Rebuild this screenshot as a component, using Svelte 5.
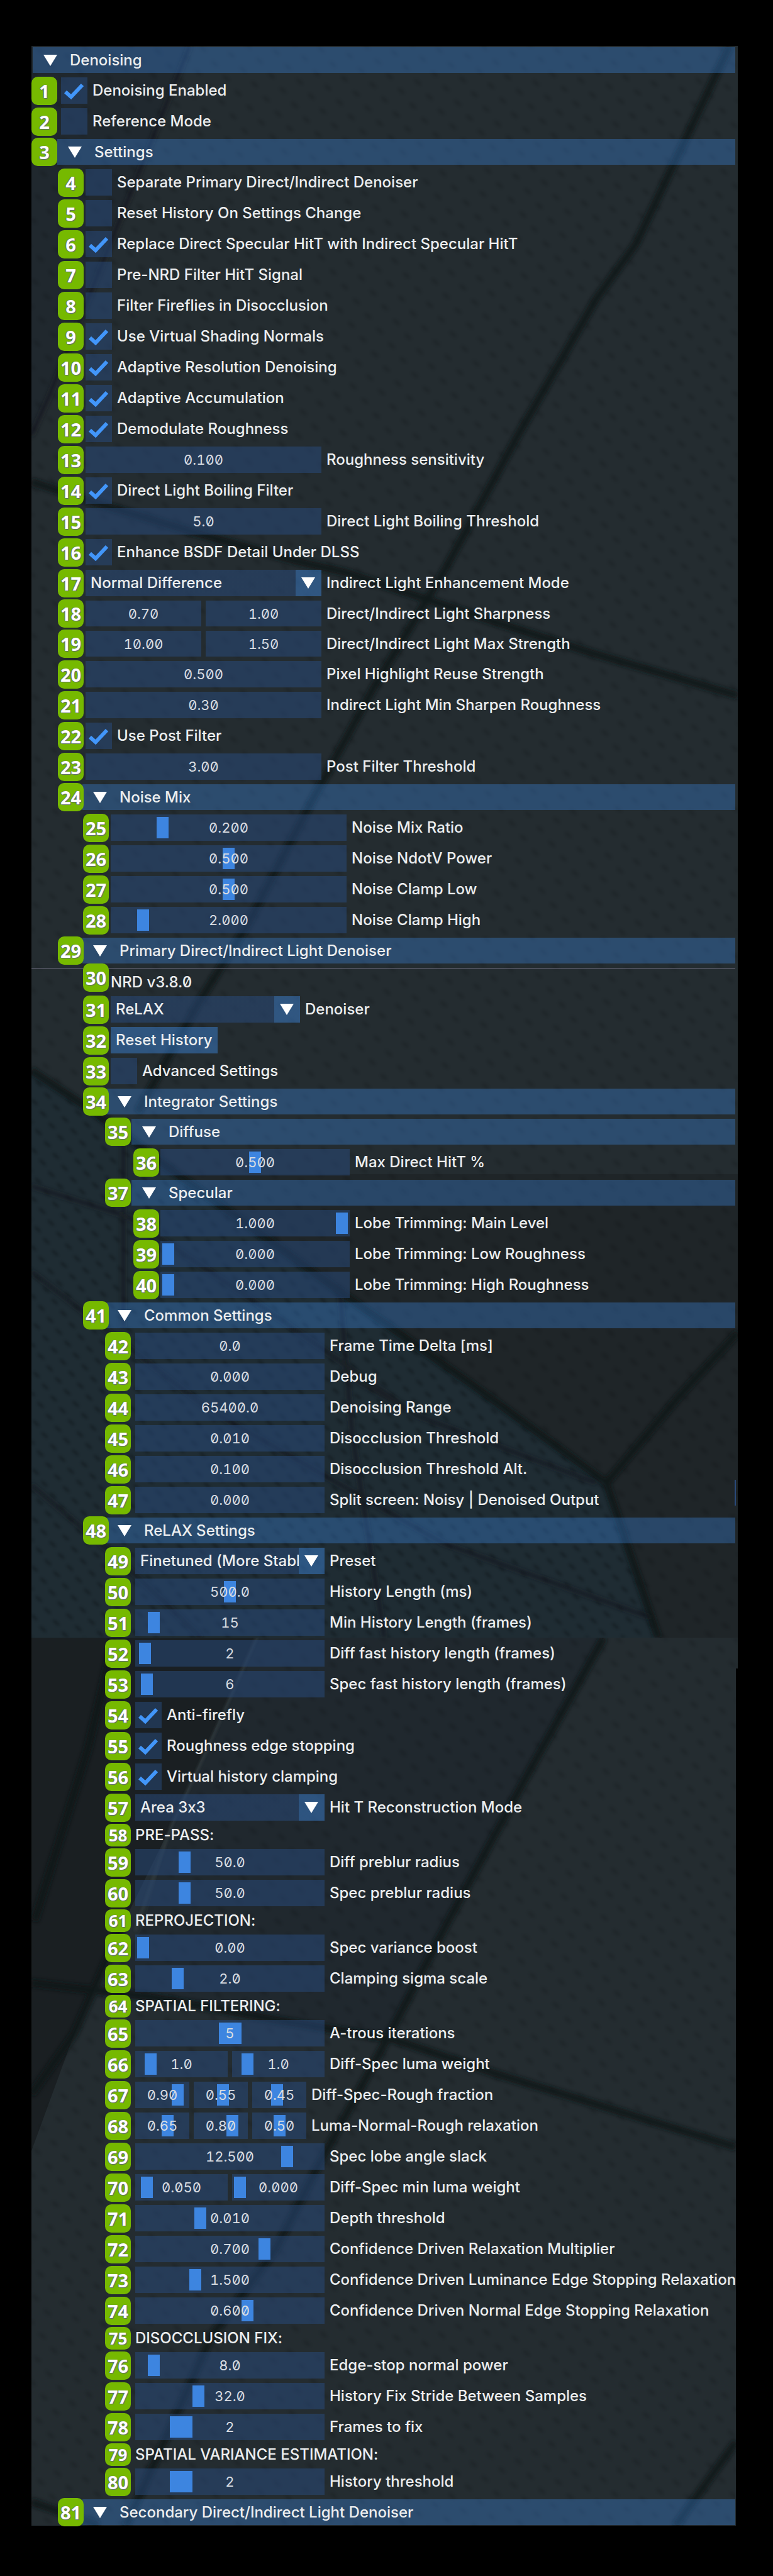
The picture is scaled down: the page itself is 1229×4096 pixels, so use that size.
<script lang="ts">
  type Row = {
    n?: number;
    lv: number;
    t: 'head' | 'check' | 'drag' | 'slide' | 'select' | 'button' | 'text' | 'version';
    label: string;
    on?: boolean;
    v?: string[];
    p?: number[];
    wide?: boolean;
  };

  const head = (n: number, lv: number, label: string): Row => ({ n, lv, t: 'head', label });
  const check = (n: number, lv: number, label: string, on = false): Row => ({ n, lv, t: 'check', label, on });
  const drag = (n: number, lv: number, label: string, ...v: string[]): Row => ({ n, lv, t: 'drag', label, v });
  const slide = (n: number, lv: number, label: string, v: string[], p: number[], wide = false): Row => ({ n, lv, t: 'slide', label, v, p, wide });
  const select = (n: number, lv: number, label: string, value: string): Row => ({ n, lv, t: 'select', label, v: [value] });
  const text = (n: number, lv: number, label: string): Row => ({ n, lv, t: 'text', label });

  const rows: Row[] = [
    { lv: 0, t: 'head', label: 'Denoising' },
    check(1, 0, 'Denoising Enabled', true),
    check(2, 0, 'Reference Mode'),
    head(3, 0, 'Settings'),
    check(4, 1, 'Separate Primary Direct/Indirect Denoiser'),
    check(5, 1, 'Reset History On Settings Change'),
    check(6, 1, 'Replace Direct Specular HitT with Indirect Specular HitT', true),
    check(7, 1, 'Pre-NRD Filter HitT Signal'),
    check(8, 1, 'Filter Fireflies in Disocclusion'),
    check(9, 1, 'Use Virtual Shading Normals', true),
    check(10, 1, 'Adaptive Resolution Denoising', true),
    check(11, 1, 'Adaptive Accumulation', true),
    check(12, 1, 'Demodulate Roughness', true),
    drag(13, 1, 'Roughness sensitivity', '0.100'),
    check(14, 1, 'Direct Light Boiling Filter', true),
    drag(15, 1, 'Direct Light Boiling Threshold', '5.0'),
    check(16, 1, 'Enhance BSDF Detail Under DLSS', true),
    select(17, 1, 'Indirect Light Enhancement Mode', 'Normal Difference'),
    drag(18, 1, 'Direct/Indirect Light Sharpness', '0.70', '1.00'),
    drag(19, 1, 'Direct/Indirect Light Max Strength', '10.00', '1.50'),
    drag(20, 1, 'Pixel Highlight Reuse Strength', '0.500'),
    drag(21, 1, 'Indirect Light Min Sharpen Roughness', '0.30'),
    check(22, 1, 'Use Post Filter', true),
    drag(23, 1, 'Post Filter Threshold', '3.00'),
    head(24, 1, 'Noise Mix'),
    slide(25, 2, 'Noise Mix Ratio', ['0.200'], [20]),
    slide(26, 2, 'Noise NdotV Power', ['0.500'], [50]),
    slide(27, 2, 'Noise Clamp Low', ['0.500'], [50]),
    slide(28, 2, 'Noise Clamp High', ['2.000'], [11]),
    head(29, 1, 'Primary Direct/Indirect Light Denoiser'),
    { n: 30, lv: 2, t: 'version', label: 'NRD v3.8.0' },
    select(31, 2, 'Denoiser', 'ReLAX'),
    { n: 32, lv: 2, t: 'button', label: 'Reset History' },
    check(33, 2, 'Advanced Settings'),
    head(34, 2, 'Integrator Settings'),
    head(35, 3, 'Diffuse'),
    slide(36, 4, 'Max Direct HitT %', ['0.500'], [50]),
    head(37, 3, 'Specular'),
    slide(38, 4, 'Lobe Trimming: Main Level', ['1.000'], [100]),
    slide(39, 4, 'Lobe Trimming: Low Roughness', ['0.000'], [0]),
    slide(40, 4, 'Lobe Trimming: High Roughness', ['0.000'], [0]),
    head(41, 2, 'Common Settings'),
    drag(42, 3, 'Frame Time Delta [ms]', '0.0'),
    drag(43, 3, 'Debug', '0.000'),
    drag(44, 3, 'Denoising Range', '65400.0'),
    drag(45, 3, 'Disocclusion Threshold', '0.010'),
    drag(46, 3, 'Disocclusion Threshold Alt.', '0.100'),
    drag(47, 3, 'Split screen: Noisy | Denoised Output', '0.000'),
    head(48, 2, 'ReLAX Settings'),
    select(49, 3, 'Preset', 'Finetuned (More Stable)'),
    slide(50, 3, 'History Length (ms)', ['500.0'], [50]),
    slide(51, 3, 'Min History Length (frames)', ['15'], [6]),
    slide(52, 3, 'Diff fast history length (frames)', ['2'], [1]),
    slide(53, 3, 'Spec fast history length (frames)', ['6'], [2]),
    check(54, 3, 'Anti-firefly', true),
    check(55, 3, 'Roughness edge stopping', true),
    check(56, 3, 'Virtual history clamping', true),
    select(57, 3, 'Hit T Reconstruction Mode', 'Area 3x3'),
    text(58, 3, 'PRE-PASS:'),
    slide(59, 3, 'Diff preblur radius', ['50.0'], [24]),
    slide(60, 3, 'Spec preblur radius', ['50.0'], [24]),
    text(61, 3, 'REPROJECTION:'),
    slide(62, 3, 'Spec variance boost', ['0.00'], [0]),
    slide(63, 3, 'Clamping sigma scale', ['2.0'], [20]),
    text(64, 3, 'SPATIAL FILTERING:'),
    slide(65, 3, 'A-trous iterations', ['5'], [50], true),
    slide(66, 3, 'Diff-Spec luma weight', ['1.0', '1.0'], [10, 10]),
    slide(67, 3, 'Diff-Spec-Rough fraction', ['0.90', '0.55', '0.45'], [90, 55, 45]),
    slide(68, 3, 'Luma-Normal-Rough relaxation', ['0.65', '0.80', '0.50'], [64, 80, 50]),
    slide(69, 3, 'Spec lobe angle slack', ['12.500'], [83]),
    slide(70, 3, 'Diff-Spec min luma weight', ['0.050', '0.000'], [5, 0]),
    slide(71, 3, 'Depth threshold', ['0.010'], [33]),
    slide(72, 3, 'Confidence Driven Relaxation Multiplier', ['0.700'], [70]),
    slide(73, 3, 'Confidence Driven Luminance Edge Stopping Relaxation', ['1.500'], [30]),
    slide(74, 3, 'Confidence Driven Normal Edge Stopping Relaxation', ['0.600'], [60]),
    text(75, 3, 'DISOCCLUSION FIX:'),
    slide(76, 3, 'Edge-stop normal power', ['8.0'], [6]),
    slide(77, 3, 'History Fix Stride Between Samples', ['32.0'], [32]),
    slide(78, 3, 'Frames to fix', ['2'], [20], true),
    text(79, 3, 'SPATIAL VARIANCE ESTIMATION:'),
    slide(80, 3, 'History threshold', ['2'], [20], true),
    head(81, 1, 'Secondary Direct/Indirect Light Denoiser'),
  ];

  const fieldClass = (r: Row) =>
    'field' +
    (r.v!.length === 3 ? ' triple' : r.lv === 1 || (r.lv === 2 && r.t === 'slide') ? ' long' : '');
</script>

{#snippet arrow()}
  <svg class="arrow" viewBox="0 0 22 18" aria-hidden="true"><path d="M0 0H22L11 18Z" /></svg>
{/snippet}

<main>
  <section class="panel" aria-label="Denoising settings">
    <svg class="backdrop" viewBox="50 73 1123 3943" preserveAspectRatio="none" aria-hidden="true">
      <defs>
        <pattern id="pits" width="46" height="38" patternUnits="userSpaceOnUse" patternTransform="rotate(12)">
          <ellipse cx="10" cy="9" rx="7" ry="3" transform="rotate(28 10 9)" />
          <ellipse cx="33" cy="28" rx="7" ry="3" transform="rotate(28 33 28)" />
        </pattern>
        <pattern id="slots" width="36" height="30" patternUnits="userSpaceOnUse" patternTransform="rotate(14)">
          <ellipse cx="9" cy="7" rx="7" ry="2" transform="rotate(28 9 7)" />
          <ellipse cx="27" cy="22" rx="7" ry="2" transform="rotate(28 27 22)" />
        </pattern>
        <filter id="soft"><feGaussianBlur stdDeviation="3" /></filter>
        <filter id="softer"><feGaussianBlur stdDeviation="2" /></filter>
        <clipPath id="top"><rect x="50" y="73" width="1123" height="2531" /></clipPath>
        <clipPath id="bottom"><rect x="50" y="2604" width="1123" height="1412" /></clipPath>
      </defs>
      <g clip-path="url(#top)">
        <rect class="base" x="50" y="73" width="1123" height="2531" />
        <path class="left" d="M302 73L188 357L78 631L50 693V73Z" />
        <path class="shade" d="M282 1867L1173 1867V2604H1046L964 2358L752 2203Z" />
        <path class="pits" d="M50 73H1173V2604H50Z" />
        <path class="blue" d="M50 1702L149 1768L282 1867L549 2060L752 2203L964 2358L1046 2604H50Z" />
        <path class="slots" d="M50 1702L149 1768L282 1867L549 2060L752 2203L964 2358L1046 2604H50Z" />
        <g class="seam">
          <path d="M1160 73L1011 388L948 475L823 693L705 910L596 1090L494 1277L392 1473L314 1597L219 1768" />
          <path d="M50 766L157 801L314 848L470 892L549 910L784 988L940 1038L1173 1106" />
          <path d="M50 1702L149 1768L282 1867L549 2060L752 2203L964 2358L1046 2604" />
          <path d="M1173 2119L1080 2220L964 2358" />
        </g>
        <g class="thin">
          <path d="M302 73L188 357L78 631L50 693" />
          <path d="M196 1792V2110" />
          <path d="M541 2062L560 2280L611 2604" />
          <path d="M50 1886L204 1935L420 2080L666 2252" />
          <path d="M541 2180L666 2252L948 2358" />
          <path d="M50 2022L330 2240L705 2454L1034 2572" />
          <path d="M50 2361L190 2480L320 2604" />
        </g>
        <rect class="mark" x="1168" y="2353" width="2" height="41" />
      </g>
      <g clip-path="url(#bottom)">
        <rect class="base" x="50" y="2604" width="1123" height="1412" />
        <path class="dark" d="M50 2604H408L274 2899L200 3050L118 3234L50 3420Z" />
        <path class="left" d="M408 2604H960L831 2836L713 3054L615 3243L439 3212L160 3170L227 3066L274 2899Z" />
        <path class="pits" d="M408 2604H1173V4016H50V3420L118 3234L227 3066Z" />
        <g class="seam">
          <path d="M960 2604L831 2836L713 3054L615 3243L502 3451L439 3575L337 3713L266 3871L200 4016" />
          <path d="M50 3153L240 3175L439 3212L627 3243L784 3296L1170 3414" />
          <path d="M182 2604L140 2780L55 3054" />
          <path d="M200 3050L118 3234L50 3330" />
          <path d="M1170 3883L1074 4016" />
          <path d="M50 3978L157 4016" />
        </g>
        <path class="gleam" d="M408 2604L330 2780L274 2899L215 3070" />
        <rect x="1170" y="2653" width="3" height="1363" />
      </g>
    </svg>

    {#each rows as r, i}
      {#if r.t === 'version'}<hr />{/if}
      <div class="row lv{r.lv} {r.t}" class:pair={r.t === 'drag' && r.v!.length === 2}>
        {#if r.n}<span class="badge">{r.n}</span>{/if}

        {#if r.t === 'head'}
          <button class="header" type="button" aria-expanded="true">{@render arrow()}<span>{r.label}</span></button>
        {:else if r.t === 'check'}
          <span class="box">
            <input id="f{i}" type="checkbox" checked={r.on} />
            {#if r.on}
              <svg class="tick" viewBox="0 0 42 42" aria-hidden="true"><path d="M7 23L16 31L34 12" /></svg>
            {/if}
          </span>
          <label for="f{i}">{r.label}</label>
        {:else if r.t === 'drag'}
          <span class={fieldClass(r)}>
            {#each r.v! as v, k}
              <input class="drag-value" id="f{i}{k ? `-${k}` : ''}" type="text" value={v} aria-label={r.label} />
            {/each}
          </span>
          <label for="f{i}">{r.label}</label>
        {:else if r.t === 'slide'}
          <span class={fieldClass(r)}>
            {#each r.v! as v, k}
              <span class="slider">
                <input class:wide={r.wide} id="f{i}{k ? `-${k}` : ''}" type="range" min="0" max="100" value={r.p![k]} aria-label={r.label} />
                <output>{v}</output>
              </span>
            {/each}
          </span>
          <label for="f{i}">{r.label}</label>
        {:else if r.t === 'select'}
          <span class={fieldClass(r) + ' combo'}>
            <select id="f{i}"><option>{r.v![0]}</option></select>
            {@render arrow()}
          </span>
          <label for="f{i}">{r.label}</label>
        {:else if r.t === 'button'}
          <button class="action" type="button">{r.label}</button>
        {:else if r.t === 'version'}
          <span class="caption">{r.label}</span>
        {:else}
          <span class="caption">{r.label}</span>
        {/if}
      </div>
    {/each}
  </section>
</main>

<style>
  :global(body) {
    background: #000;
  }

  main {
    padding: 73px 56px 80px 50px;
    font: 500 24px/28px Inter, 'Noto Sans', sans-serif;
    font-feature-settings: 'zero', 'calt' 0;
    color: #eceeef;
  }

  main * {
    box-sizing: border-box;
  }

  .panel {
    position: relative;
    isolation: isolate;
    padding: 2px 4px 1px 0;
    background: #242c30;
  }

  .backdrop {
    position: absolute;
    inset: 0;
    z-index: -1;
    width: 100%;
    height: 100%;
  }

  .base { fill: #242c30; }
  .left { fill: #20282e; }
  .shade { fill: #1f2528; }
  .dark { fill: #1a1f22; }
  .blue { fill: #1f2c33; }
  .mark { fill: #29497a; }
  .pits { fill: url(#pits); opacity: 0.12; filter: url(#softer); }
  .slots { fill: url(#slots); opacity: 0.3; filter: url(#softer); }
  .seam { fill: none; stroke: #0f1313; stroke-width: 12; opacity: 0.8; filter: url(#soft); }
  .thin { fill: none; stroke: #12181a; stroke-width: 7; opacity: 0.6; filter: url(#soft); }
  .gleam { fill: none; stroke: #343d41; stroke-width: 3; filter: url(#softer); }

  .row {
    display: flex;
    align-items: center;
    height: 42px;
    margin-bottom: 7px;
    padding-left: var(--indent);
    white-space: nowrap;
  }

  .lv0 { --indent: 0px; --gap: 6px; --join: 0px; }
  .lv1 { --indent: 42px; --gap: 3px; --join: -2px; }
  .lv2 { --indent: 82px; --gap: 3px; --join: -3px; }
  .lv3 { --indent: 117px; --gap: 7px; --join: 1px; }
  .lv4 { --indent: 162px; --gap: 2px; --join: 0px; }

  .row.head,
  .row.pair {
    height: 41px;
  }

  .row.head:last-of-type {
    margin-bottom: 0;
  }

  .row.text {
    height: 31px;
  }

  .row.version {
    height: 36px;
    align-items: flex-end;
  }

  .row.version .caption {
    line-height: 30px;
  }

  .badge {
    position: relative;
    z-index: 1;
    flex: none;
    width: 41px;
    height: 45px;
    margin-right: var(--gap);
    border-radius: 10px;
    background: #76b900;
    color: #fff;
    font: 700 29px/45px 'Open Sans', 'Noto Sans', sans-serif;
    text-align: center;
    text-shadow: 1px 1px 1px #5c6670, -1px 0 1px #5c6670;
  }

  .text .badge {
    height: 36px;
    font-size: 26px;
    line-height: 36px;
  }

  .head .badge {
    margin-right: var(--join);
  }

  button,
  select,
  input {
    margin: 0;
    border: 0;
    border-radius: 0;
    font: inherit;
    font-feature-settings: inherit;
    color: inherit;
  }

  .header {
    flex: 1;
    display: flex;
    align-items: center;
    gap: 20px;
    height: 41px;
    padding: 0 17px;
    background: rgba(66, 150, 250, 0.31);
    text-align: left;
  }

  .header:first-child {
    margin-left: 2px;
  }

  .arrow {
    flex: none;
    width: 22px;
    height: 18px;
    fill: #fff;
  }

  .box,
  .slider,
  .combo {
    display: grid;
    align-items: center;
  }

  .box > *,
  .slider > *,
  .combo > * {
    grid-area: 1 / 1;
  }

  .box,
  .box input {
    width: 42px;
    height: 42px;
  }

  .box input {
    appearance: none;
    background: rgba(41, 74, 122, 0.54);
  }

  .tick {
    width: 42px;
    height: 42px;
    fill: none;
    stroke: #4296fa;
    stroke-width: 6;
    pointer-events: none;
  }

  label {
    padding-left: 8px;
  }

  .field {
    flex: none;
    display: grid;
    grid-auto-flow: column;
    grid-auto-columns: minmax(0, 1fr);
    gap: 7px;
    width: 301px;
    height: 100%;
  }

  .field.long {
    width: 375px;
  }

  .field.triple {
    width: 272px;
  }

  .drag-value,
  .slider output {
    color: #d9dde2;
    font-size: 22px;
    font-weight: 400;
    font-feature-settings: 'zero', 'tnum';
    text-align: center;
  }

  .drag-value {
    width: 100%;
    height: 100%;
    padding: 0;
    background: rgba(41, 74, 122, 0.54);
  }

  .slider {
    background: rgba(41, 74, 122, 0.54);
  }

  .slider output {
    pointer-events: none;
  }

  .slider input {
    appearance: none;
    width: 100%;
    height: 100%;
    padding: 0 3px;
    background: none;
  }

  .slider input::-webkit-slider-thumb {
    appearance: none;
    width: 19px;
    height: 34px;
    border-radius: 0;
    background: #3d85e0;
  }

  .slider input.wide::-webkit-slider-thumb {
    width: 36px;
  }

  .combo select {
    appearance: none;
    width: 100%;
    height: 100%;
    padding: 0 41px 0 8px;
    background: linear-gradient(to left, rgba(66, 150, 250, 0.4) 41px, rgba(41, 74, 122, 0.54) 41px);
  }

  .combo .arrow {
    justify-self: end;
    margin-right: 10px;
    pointer-events: none;
  }

  .action {
    height: 42px;
    padding: 0 8px;
    background: rgba(66, 150, 250, 0.4);
  }

  hr {
    height: 2px;
    margin: 0;
    border: 0;
    background: rgba(110, 110, 128, 0.5);
  }
</style>
